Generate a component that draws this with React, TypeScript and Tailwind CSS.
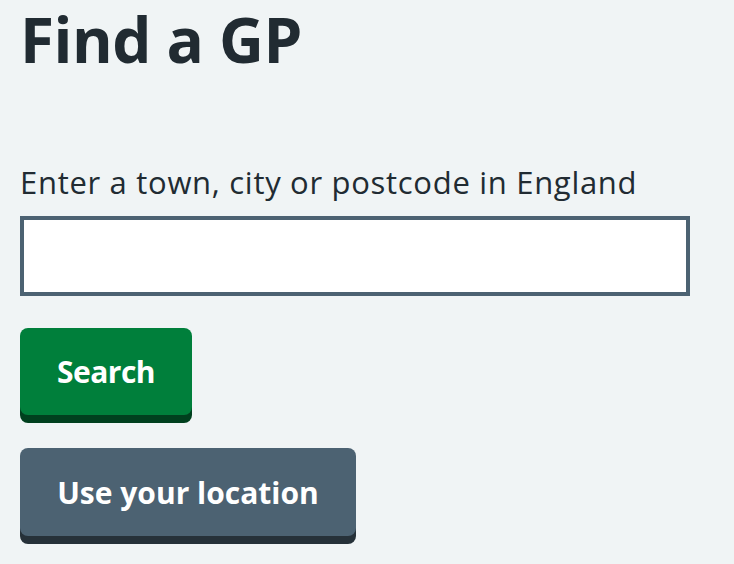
import React from "react";

export default function App() {
  return (
    <div className="min-h-[564px] w-[734px] bg-[#f0f4f5] px-5 pt-[3px] text-[#212b32]" style={{ fontFamily: '"Open Sans", "Noto Sans", sans-serif' }}>
      <h1 className="m-0 text-[62px] font-bold leading-[72px] tracking-[-0.5px]">Find a GP</h1>
      <form className="mt-[89px] flex flex-col items-start" onSubmit={(e) => e.preventDefault()}>
        <label htmlFor="loc" className="text-[31px] leading-[36px] tracking-[0.7px]">Enter a town, city or postcode in England</label>
        <input id="loc" type="text" className="mt-4 box-border h-[80px] w-[670px] border-4 border-[#4c6272] bg-white outline-none" />
        <button type="submit" className="mt-8 flex h-[87px] w-[172px] items-center justify-center rounded-lg bg-[#007f3b] text-[30px] font-bold tracking-[-0.5px] text-white shadow-[0_8px_0_#00401e]">
          Search
        </button>
        <button type="button" className="mt-[33px] flex h-[88px] w-[336px] items-center justify-center rounded-lg bg-[#4c6272] text-[30px] font-bold text-white shadow-[0_8px_0_#263139]">
          Use your location
        </button>
      </form>
    </div>
  );
}
